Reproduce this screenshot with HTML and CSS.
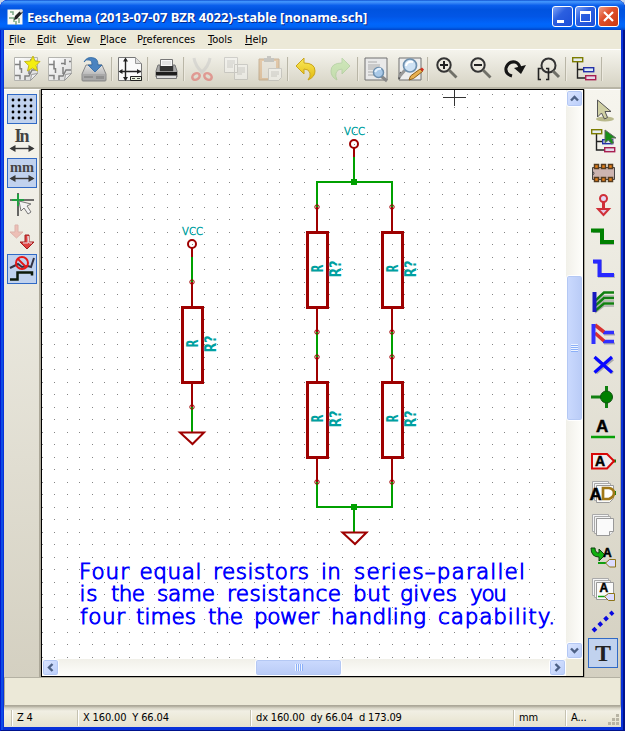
FILE: index.html
```html
<!DOCTYPE html>
<html lang="en">
<head>
<meta charset="utf-8">
<title>Eeschema</title>
<link rel="stylesheet" href="styles.css">
</head>
<body>
<svg class="defs" width="0" height="0">
  <defs>
    <linearGradient id="paper" x1="0" y1="0" x2="1" y2="1"><stop offset="0" stop-color="#fff"/><stop offset="1" stop-color="#d8d8d8"/></linearGradient>
    <linearGradient id="gold" x1="0" y1="0" x2="0" y2="1"><stop offset="0" stop-color="#f9e95c"/><stop offset="1" stop-color="#e3b90c"/></linearGradient>
    <linearGradient id="metal" x1="0" y1="0" x2="0" y2="1"><stop offset="0" stop-color="#e4e4e4"/><stop offset="1" stop-color="#9c9c9c"/></linearGradient>
    <pattern id="grid" x="42" y="94" width="25" height="25" patternUnits="userSpaceOnUse">
      <path fill="#848484" d="M0 0h1v1h-1zM12 0h1v1h-1zM0 13h1v1h-1zM12 13h1v1h-1z"/>
    </pattern>
    <symbol id="sheet" viewBox="0 0 30 30">
      <path d="M3.500 3.500h23v16l-7 7h-16z" fill="url(#paper)" stroke="#b4b4b0"/>
      <path d="M4 10.500h5m0-4v9m-5 6h5v4M14 26v-4h4l3-6h5M16 9.500h4m4-2h2M20 5v6M10.500 14v5M18 13v7" fill="none" stroke="#808080" stroke-width="1.500"/>
      <path d="M19.500 26.500l1-6 6-1z" fill="#eee" stroke="#999"/>
    </symbol>
    <symbol id="lens" viewBox="0 0 30 30">
      <circle cx="12" cy="11" r="6.700" fill="#edeae0" stroke="#343434" stroke-width="2"/>
      <path d="M17 16l7.500 7.500" stroke="#707068" stroke-width="2.800"/>
    </symbol>
    <symbol id="pages" viewBox="0 0 30 30">
      <path d="M4.500 4.500h16v17h-16z" fill="#f4f4f4" stroke="#aaa"/>
      <path d="M6.500 6.500h16v17h-16z" fill="#f4f4f4" stroke="#aaa"/>
      <path d="M8.500 8.500h17v13l-4 4h-13z" fill="#fafafa" stroke="#999"/>
    </symbol>
    <symbol id="tree" viewBox="0 0 30 30">
      <path d="M8.500 8v16h9M8.500 15.500h6" fill="none" stroke="#222" stroke-width="1.400"/>
      <rect x="3.700" y="3.700" width="10" height="4" fill="#e4ecf0" stroke="#7c7c00" stroke-width="1.400"/>
      <rect x="14.700" y="13.700" width="10" height="4" fill="#d8e8f4" stroke="#2430a8" stroke-width="1.400"/>
      <rect x="16.700" y="21.700" width="10" height="4" fill="#e4d8e8" stroke="#a82050" stroke-width="1.400"/>
    </symbol>
    <symbol id="dim" viewBox="0 0 30 30">
      <path d="M4 22.500h22" stroke="#383838" stroke-width="1.400"/>
      <path d="M2.500 22.500l6-3.500v7zM27.500 22.500l-6-3.500v7z" fill="#383838"/>
    </symbol>
    <g id="resistor" fill="none" stroke="#9e0000">
      <path d="M0 0V25M0 101V125" stroke-width="2"/>
      <circle r="2.200"/><circle cy="125" r="2.200"/>
      <rect x="-9.500" y="25.500" width="20" height="75" stroke-width="3"/>
    </g>
    <g id="resistor-text" class="ref">
      <text transform="translate(5.500 65.500) rotate(-90)" textLength="8" lengthAdjust="spacingAndGlyphs">R</text>
      <text transform="translate(23.500 70.500) rotate(-90)" textLength="17" lengthAdjust="spacingAndGlyphs">R?</text>
    </g>
    <g id="power" fill="none" stroke="#9e0000" stroke-width="2"><circle r="4"/><path d="M0 4v9"/></g>
    <path id="ground" d="M-12 .5h24L.5 12z" fill="none" stroke="#9e0000" stroke-width="2"/>
  </defs>
</svg>
<div class="window">
  <header class="titlebar">
    <svg class="app" width="16" height="16"><path d="M.5.5h15v15H.5z" fill="#f8faf4"/><path d="M3 3h3v3M2 9h5v4M9 12v4M12 9v5" fill="none" stroke="#7ba885" stroke-width="1.500"/><path d="M7 11l1-4 6-6 2 2-6 7z" fill="#222"/><path d="M12 2l2-2 2 2-2 2z" fill="#ddd"/></svg>
    <span class="caption">Eeschema (2013-07-07 BZR 4022)-stable [noname.sch]</span>
    <div class="controls">
      <button><svg width="19" height="19"><path d="M4 13h7v3H4z" fill="#fff"/></svg></button>
      <button><svg width="19" height="19"><path d="M4 4h11v11H4zM5 7v7h9V7z" fill="#fff" fill-rule="evenodd"/></svg></button>
      <button class="close"><svg width="19" height="19"><path d="M5 5l9 9M14 5l-9 9" stroke="#fff" stroke-width="2.200"/></svg></button>
    </div>
  </header>
  <nav class="menu"><span><u>F</u>ile</span><span><u>E</u>dit</span><span><u>V</u>iew</span><span><u>P</u>lace</span><span>P<u>r</u>eferences</span><span><u>T</u>ools</span><span><u>H</u>elp</span></nav>
  <div class="toolbar">
    <i><svg viewBox="0 0 30 30"><use href="#sheet"/><path d="M22 2l2 5 5 .5-4 4 1.500 5.500-5-3-5 3 1.300-5.500-4.300-4 6-.5z" fill="#f4ee10" stroke="#c4b820"/></svg></i>
    <i><svg viewBox="0 0 30 30"><use href="#sheet"/></svg></i>
    <i><svg viewBox="0 0 30 30"><path d="M7 11h16l4 9v6q0 1-1 1H4q-1 0-1-1v-6z" fill="url(#metal)" stroke="#888"/><path d="M4 20h22v6H4z" fill="#a9a9a9"/><path d="M5 23h9M18 22v3M20 22v3M22 22v3M24 22v3" stroke="#777"/><path d="M5 8Q8 2 15 4q4 1 4 7h4l-7 7-7-7h4q0-5-3-5-3-1-5 2z" fill="#4a83c0" stroke="#2f66a0" stroke-width=".8"/></svg></i>
    <b></b>
    <i><svg viewBox="0 0 30 30"><path d="M3.500 3.500h17l6 6v17h-23z" fill="#fafafa" stroke="#777"/><path d="M20.500 3.500v6h6" fill="#ddd" stroke="#999"/><path d="M10.500 5v21M5 17.500h21" stroke="#222" stroke-width="1.400"/><path d="M10.500 3.500l2.500 4H8zM10.500 27l2.500-4H8zM3.500 17.500l4-2.500v5zM26 17.500l-4-2.500v5z" fill="#222"/><path d="M15.500 22.500h11v4h-11z" fill="#e8f0dc" stroke="#222"/><path d="M17 24.500h3m2 0h3" stroke="#444"/></svg></i>
    <b></b>
    <i><svg viewBox="0 0 30 30"><path d="M9.500 5.500h12V15h-12z" fill="#f8f8f8" stroke="#777"/><path d="M11 8h9M11 10h9" stroke="#ccc"/><path d="M7 11h2v6h13v-6h2l2 6v6H5v-6z" fill="#aaa" stroke="#777"/><path d="M9 12h13v5H9z" fill="#333"/><path d="M5 18h21v4H5z" fill="#1e1e1e"/><path d="M5.500 21.500h20v3h-20z" fill="#ddd" stroke="#777"/></svg></i>
    <b></b>
    <i class="off"><svg viewBox="0 0 30 30"><path d="M7 4q1 8 9 15M23 4q-1 8-9 15" fill="none" stroke="#c4c4c4" stroke-width="3"/><ellipse cx="9" cy="22.500" rx="4" ry="3" fill="none" stroke="#e04848" stroke-width="2.500" transform="rotate(-35 9 22.500)"/><ellipse cx="21" cy="22.500" rx="4" ry="3" fill="none" stroke="#e04848" stroke-width="2.500" transform="rotate(35 21 22.500)"/></svg></i>
    <i class="off"><svg viewBox="0 0 30 30"><path d="M3.500 3.500h13v15h-13zM13.500 10.500h13v15h-13z" fill="#f8f8f8" stroke="#aaa"/><path d="M6 7h8M6 9h8M6 11h6M6 13h6M16 14h8M16 16h8M16 18h8M16 20h5" stroke="#aaa"/></svg></i>
    <i class="off"><svg viewBox="0 0 30 30"><path d="M4 5h20v21H4z" fill="#d8a068" stroke="#a07848"/><path d="M7 7h14v17H7z" fill="#e4e0d8"/><path d="M9 4h3V2h4v2h3v4H9z" fill="#999"/><path d="M13.500 14.500h13v9l-3 3h-10z" fill="#fafafa" stroke="#aaa"/><path d="M16 18h8M16 20h8M16 22h6" stroke="#aaa"/></svg></i>
    <b></b>
    <i><svg viewBox="0 0 30 30"><path d="M5 12l8-8v5q11 0 11 8 0 6-7 9 3-4 2-7-1-4-6-4v5z" fill="url(#gold)" stroke="#c9a51a"/></svg></i>
    <i class="off"><svg viewBox="0 0 30 30"><path d="M25 12l-8-8v5Q6 9 6 17q0 6 6 9-2-4-1-7 1-4 6-4v5z" fill="#a8e088" stroke="#88c070"/></svg></i>
    <b></b>
    <i><svg viewBox="0 0 30 30"><path d="M4 4h22v22H4z" fill="#e9e9e9" stroke="#707070"/><path d="M7 8h9M7 11h12M7 13h12M7 15h8M7 18h8M7 21h6" stroke="#aaa"/><path d="M20 22l6 5" stroke="#888" stroke-width="3"/><circle cx="17.500" cy="18.500" r="5" fill="#a9c9e8" stroke="#6d8fae" stroke-width="1.500"/><path d="M14 18q2-4 6-3" stroke="#e4f2ff" stroke-width="2" fill="none"/></svg></i>
    <i><svg viewBox="0 0 30 30"><path d="M4 4h22v22H4z" fill="#eee" stroke="#707070"/><path d="M6 18l-2 7" stroke="#555" stroke-width="2"/><path d="M10 16l-6 7" stroke="#999" stroke-width="3"/><circle cx="15" cy="11.500" r="6.500" fill="#cfe2f4" stroke="#6d8fae" stroke-width="1.700"/><path d="M11 12q1-5 7-4" stroke="#fff" stroke-width="2" fill="none"/><path d="M14 26l1.500-4L25 15l2.500 2.500-9 7z" fill="#e8b050" stroke="#906018"/><path d="M25 15l2.500 2.500 1.500-2-2-2z" fill="#d03020"/></svg></i>
    <b></b>
    <i><svg viewBox="0 0 30 30"><use href="#lens" x="1"/><path d="M9 11h8M13 7v8" stroke="#222" stroke-width="2"/></svg></i>
    <i><svg viewBox="0 0 30 30"><use href="#lens" x="1"/><path d="M9 11h8" stroke="#222" stroke-width="2"/></svg></i>
    <i><svg viewBox="0 0 30 30"><path d="M13 22Q6 20 7 14q2-7 9-6 4 1 5 6" fill="none" stroke="#151515" stroke-width="3"/><path d="M15 14l12-3-5 9z" fill="#151515"/></svg></i>
    <i><svg viewBox="0 0 30 30"><circle cx="15.500" cy="11.500" r="7" fill="none" stroke="#343434" stroke-width="2"/><path d="M20 17l6 6" stroke="#707068" stroke-width="3"/><path d="M8 14.500H5.500v11H8M13 14.500h2.500v11H13" fill="none" stroke="#222" stroke-width="1.600"/></svg></i>
    <b></b>
    <i><svg viewBox="0 0 30 30"><use href="#tree"/></svg></i>
    <b></b>
  </div>
  <main class="work">
    <aside class="side left">
      <i class="on"><svg viewBox="0 0 30 30"><path d="M6 6h20M6 12h20M6 18h20M6 24h20" stroke="#000" stroke-width="2.800" stroke-dasharray="0 6" stroke-linecap="round"/></svg></i>
      <i><svg viewBox="0 0 30 30"><text class="unit" x="7.500" y="16" textLength="15">In</text><use href="#dim"/></svg></i>
      <i class="on"><svg viewBox="0 0 30 30"><text class="unit mm" x="3" y="14" textLength="24" lengthAdjust="spacingAndGlyphs">mm</text><use href="#dim" y="-2"/></svg></i>
      <i><svg viewBox="0 0 30 30"><path d="M3 10h24M11 3v23" stroke="#444" stroke-width="1.600"/><path d="M5 10h12M11 4v12" stroke="#20a040" stroke-width="2"/><path d="M12 11l12 3-4 2 4 6-3 2-4-6-3 3z" fill="#f2f2f2" stroke="#777"/></svg></i>
      <i><svg viewBox="0 0 30 30"><path d="M8 3h3v7h5l-6.500 6L3 10h5z" fill="#edb0a8" stroke="#d8a098" opacity=".75"/><path d="M18 13h4v7h5l-7 7-7-7h5z" fill="#e04040" stroke="#a02020"/><path d="M16 21h5v-7l1 7h3" fill="none" stroke="#e8e0e4"/></svg></i>
      <i class="on"><svg viewBox="0 0 30 30"><path d="M3 14l8-4 4 3 6-1 3 1 3-9" fill="none" stroke="#334" stroke-width="2"/><path d="M3 25.500h7.500v-7H25v3" fill="none" stroke="#0d1a0a" stroke-width="2.500"/><circle cx="15" cy="9" r="6" fill="none" stroke="#e51818" stroke-width="2"/><path d="M11 5l8 8" stroke="#e51818" stroke-width="2"/></svg></i>
    </aside>
    <section class="viewport">
      <svg class="sheet" width="524" height="569" viewBox="42 90 524 569">
        <rect x="42" y="90" width="524" height="569" fill="url(#grid)"/>
        <path d="M443 97.500h23M454.500 90v16" stroke="#333"/>
        <g stroke="#00a000" stroke-width="2" fill="none">
          <path d="M192 257v25M192 407v25M354 157v25M317 207v-25h75v25M317 332v25M392 332v25M317 482v25h75v-25M354 507v25"/>
        </g>
        <path d="M351 179h6v6h-6zM351 504h6v6h-6z" fill="#00a000"/>
        <use href="#resistor" x="192" y="282"/><use href="#resistor" x="317" y="207"/><use href="#resistor" x="392" y="207"/><use href="#resistor" x="317" y="357"/><use href="#resistor" x="392" y="357"/>
        <use href="#resistor-text" x="192" y="282"/><use href="#resistor-text" x="317" y="207"/><use href="#resistor-text" x="392" y="207"/><use href="#resistor-text" x="317" y="357"/><use href="#resistor-text" x="392" y="357"/>
        <use href="#power" x="192" y="244"/><use href="#power" x="354" y="144"/>
        <use href="#ground" x="192" y="432"/><use href="#ground" x="354.500" y="532"/>
        <g class="vcc"><text x="182" y="235" textLength="21">VCC</text><text x="344" y="135" textLength="21">VCC</text></g>
        <g class="note">
          <text x="79" y="579" textLength="50">Four</text><text x="139.500" y="579" textLength="62">equal</text><text x="213" y="579" textLength="96">resistors</text><text x="321" y="579" textLength="20">in</text><text x="354" y="579" textLength="171">series–parallel</text>
          <text x="79.500" y="601" textLength="18">is</text><text x="111" y="601" textLength="34">the</text><text x="157" y="601" textLength="58">same</text><text x="227" y="601" textLength="114">resistance</text><text x="353" y="601" textLength="37">but</text><text x="400" y="601" textLength="57">gives</text><text x="470" y="601" textLength="37">you</text>
          <text x="80" y="624" textLength="45">four</text><text x="136" y="624" textLength="60">times</text><text x="208" y="624" textLength="35">the</text><text x="254" y="624" textLength="65">power</text><text x="331" y="624" textLength="95">handling</text><text x="438" y="624" textLength="117">capability.</text>
        </g>
      </svg>
      <div class="vscroll"><button><svg width="15" height="15"><path d="M4 9.500l3.500-3.500L11 9.500" /></svg></button><div class="thumb"><s></s></div><button><svg width="15" height="15"><path d="M4 5.500L7.500 9 11 5.500"/></svg></button></div>
      <div class="hscroll"><button><svg width="15" height="15"><path d="M9.500 4L6 7.500 9.500 11"/></svg></button><div class="thumb"><s></s></div><button><svg width="15" height="15"><path d="M5.500 4L9 7.500 5.500 11"/></svg></button></div>
    </section>
    <aside class="side right">
      <i><svg viewBox="0 0 30 30"><ellipse cx="17" cy="25" rx="9" ry="2.500" fill="#b9b98c"/><path d="M9.500 6v17l4-4 3 6 3-1.500-2.500-6h6z" fill="#d0d0a4" stroke="#555"/></svg></i>
      <i><svg viewBox="0 0 30 30"><use href="#tree"/><path d="M17 4v13l3.500-3 3 4 2-1-2-5h4.500z" fill="#189018" stroke="#666"/></svg></i>
      <i><svg viewBox="0 0 30 30"><path d="M4.500 9.500h22v12h-22z" fill="#ccb4b0" stroke="#444"/><path d="M4 13q4 2 0 5" fill="none" stroke="#444"/><path d="M6.500 6.500h4v4h-4zM13.500 6.500h4v4h-4zM20.500 6.500h4v4h-4zM6.500 19.500h4v4h-4zM13.500 19.500h4v4h-4zM20.500 19.500h4v4h-4z" fill="#e88018" stroke="#553c20" stroke-width="1.500"/></svg></i>
      <i><svg viewBox="0 0 30 30"><circle cx="15.500" cy="8.500" r="3.500" fill="#e4d8f4" stroke="#d03038" stroke-width="2"/><path d="M15.500 12v8" stroke="#d03038" stroke-width="3"/><path d="M10 19h11l-5.500 6z" fill="#e4c8e4" stroke="#d03038" stroke-width="2"/></svg></i>
      <i><svg viewBox="0 0 30 30"><path d="M5 10h9v12h12" transform="translate(0 -1)" fill="none" stroke="#aaa" stroke-width="4"/><path d="M3 8.500h11V20h12" fill="none" stroke="#008000" stroke-width="4"/></svg></i>
      <i><svg viewBox="0 0 30 30"><path d="M6 8h6v14h15" fill="none" stroke="#bbb" stroke-width="4"/><path d="M5 7.500h6.500V21H26" fill="none" stroke="#2828ff" stroke-width="4"/></svg></i>
      <i><svg viewBox="0 0 30 30"><path d="M7 18l9-8h10M7 23l9-8h10M7 27l9-7h10" fill="none" stroke="#aaa" stroke-width="1.500"/><path d="M7 15l9-8.500h10M7 20l9-8h10M7 25l9-7.500h10" fill="none" stroke="#108010" stroke-width="2.500"/><path d="M6.500 6v20" stroke="#1818c0" stroke-width="4"/></svg></i>
      <i><svg viewBox="0 0 30 30"><path d="M16 16.500h11M16 25.500h11" stroke="#aaa" stroke-width="2"/><path d="M15 14.500h11M15 23.500h11" stroke="#3030ff" stroke-width="3.500"/><path d="M7 7l9 7M7 15l9 8" stroke="#d83030" stroke-width="3.500"/><path d="M5.500 6v20" stroke="#3030ff" stroke-width="4"/></svg></i>
      <i><svg viewBox="0 0 30 30"><path d="M7 8l17 14M24 8L7 22" stroke="#aaa" stroke-width="3" transform="translate(1 1)"/><path d="M6.500 7l17.500 15.500M24 7L6.500 22.500" stroke="#0808ff" stroke-width="3.200"/></svg></i>
      <i><svg viewBox="0 0 30 30"><path d="M3 15h18M18.500 4v22" stroke="#108010" stroke-width="3"/><circle cx="18.500" cy="15" r="6" fill="#008000" stroke="#105010"/></svg></i>
      <i><svg viewBox="0 0 30 30"><text class="lab" x="8" y="18" font-size="17">A</text><path d="M3 23h24" stroke="#08a008" stroke-width="2.500"/></svg></i>
      <i><svg viewBox="0 0 30 30"><path d="M25 15h3" stroke="#108010" stroke-width="3"/><path d="M4 8h15l7 7-7 7.500H4z" fill="#f1eded" stroke="#d80808" stroke-width="2"/><text class="lab" x="7" y="20" font-size="14">A</text></svg></i>
      <i><svg viewBox="0 0 30 30"><use href="#pages" y="-1"/><path d="M25 15h3" stroke="#108010" stroke-width="4"/><text class="lab" x="1.500" y="21.500" font-size="17">A</text><path d="M15 10h6q5 1 5 5t-5 6h-6z" fill="#fff" stroke="#a07818" stroke-width="2.700"/></svg></i>
      <i><svg viewBox="0 0 30 30"><use href="#pages"/><path d="M21.500 25.500v-4h4" fill="#eee" stroke="#999"/></svg></i>
      <i><svg viewBox="0 0 30 30"><path d="M3 6h4q0 5 4 5V7l6 6-6 6v-4Q3 15 3 6z" fill="#10b010" stroke="#104010"/><text class="lab" x="15" y="15" font-size="12">A</text><path d="M10 21h10" stroke="#10a010" stroke-width="2"/><path d="M27.500 17.500h-6l-4 3.500 4 4h6z" fill="#dcdcff" stroke="#8c7418"/></svg></i>
      <i><svg viewBox="0 0 30 30"><use href="#pages"/><text class="lab" x="11.500" y="17.500" font-size="12">A</text><path d="M10 22.500h8" stroke="#10a010" stroke-width="1.500"/><path d="M26.500 19.500h-6l-4 3 4 4h6z" fill="#dcdcff" stroke="#8c7418"/></svg></i>
      <i><svg viewBox="0 0 30 30"><path d="M5 25L25 6" stroke="#0808e0" stroke-width="4" stroke-dasharray="4 4"/></svg></i>
      <i class="on"><svg viewBox="0 0 30 30"><text class="tee" x="7" y="23">T</text></svg></i>
    </aside>
  </main>
  <div class="messages"></div>
  <footer class="status"><span></span><span>Z 4</span><span>X 160.00&nbsp; Y 66.04</span><span>dx 160.00&nbsp; dy 66.04&nbsp; d 173.09</span><span>mm</span><span>A...</span>
    <svg class="grip" width="12" height="12"><path d="M8 0h3v3H8zM4 4h3v3H4zM8 4h3v3H8zM0 8h3v3H0zM4 8h3v3H4zM8 8h3v3H8z" fill="#b8b4a4"/></svg>
  </footer>
</div>
</body>
</html>
```
FILE: styles.css
```css
* { box-sizing: border-box; }
body { margin: 0; background: #c6d4ea; overflow: hidden; font: 11px "DejaVu Sans Condensed", "DejaVu Sans", sans-serif; color: #000; }
.defs { position: absolute; }
button { margin: 0; padding: 0; }
svg { display: block; }
i { font-style: normal; }

.window { width: 625px; height: 731px; padding: 0 4px 4px; display: flex; flex-direction: column; background: #0831d9; border-radius: 8px 8px 0 0; box-shadow: inset 1px 0 #0019cf, inset -2px -1px #00138c, inset 3px 0 #0c4be6; }
.titlebar { height: 30px; margin: 0 -4px; padding: 3px 6px 0 7px; display: flex; align-items: center; border-radius: 8px 8px 0 0; background: linear-gradient(#0a46c8 0, #3d95ff 4%, #3c8cf8 8%, #0a5fec 18%, #0053df 32%, #0256e6 55%, #0066fc 80%, #0064f4 90%, #0044c8 100%); }
.caption { margin-left: 4px; flex: none; width: 350px; white-space: nowrap; color: #fff; font: bold 13px "Noto Sans", sans-serif; letter-spacing: -0.01px; text-shadow: 1px 1px #0a2a88; }
.controls { margin-left: auto; display: flex; gap: 2px; }
.controls button { width: 21px; height: 21px; border: 1px solid #fff; border-radius: 3px; background: linear-gradient(135deg, #7fa5f8, #2b5fe0 40%, #1c4fd8); }
.controls .close { background: linear-gradient(135deg, #f0a088, #e0502c 40%, #c83810); }

.menu { height: 19px; padding-left: 5px; display: grid; grid-template-columns: 28px 30px 33px 37px 71px 37px 40px; align-items: center; background: #ece9d8; letter-spacing: 0; }
.toolbar { height: 40px; padding-left: 5px; display: flex; align-items: center; border-top: 1px solid #fff; border-bottom: 2px solid #b8b5a6; background: linear-gradient(#f5f4ed, #d6d3c4); }
.toolbar i { flex: none; width: 34px; display: grid; place-items: center; }
.toolbar svg { width: 30px; height: 30px; }
.toolbar b { flex: none; width: 2px; height: 24px; border-left: 1px solid #b9b6a7; border-right: 1px solid #ece9df; }
.off { opacity: .45; }

.work { height: 588px; display: flex; }
.side { flex: none; padding-top: 4px; display: flex; flex-direction: column; gap: 2px; background: linear-gradient(#f6f5ee, #d4d0c1); border-top: 1px solid #fff; }
.side i { width: 30px; height: 30px; }
.side svg { width: 30px; height: 30px; }
.side .on { background: #c1d2ee; box-shadow: inset 0 0 0 1px #316ac5; }
.left { width: 37px; padding-left: 3px; border-right: 2px solid #aca899; }
.right { width: 37px; padding-left: 3px; border-left: 1px solid #aca899; border-right: 1px solid #aca899; }
.unit { font: bold 18px "Liberation Serif", serif; fill: #444; }
.mm { font-size: 15px; }
.lab { font-family: "Liberation Sans", sans-serif; font-weight: bold; stroke: #000; stroke-width: .5; }
.tee { font: bold 24px "Liberation Serif", serif; fill: #222; }

.viewport { width: 543px; height: 588px; border: 1px solid #000; display: grid; grid-template: 569px 17px / 524px 17px; background: #ece9d8; }
.sheet { background: #fff; }
.note { font: 200 21.500px "DejaVu Sans", sans-serif; fill: #00f; stroke: #00f; stroke-width: 1; }
.vcc { font: 200 10px "DejaVu Sans", sans-serif; fill: #00a0a0; stroke: #00a0a0; stroke-width: .5; }
.ref { font: bold 15px "DejaVu Sans", sans-serif; fill: #00a0a0; }
.vscroll { display: grid; grid-template-rows: 17px 168px 146px 1fr 17px; background: linear-gradient(90deg, #f1f0e9, #fefefb); }
.vscroll .thumb { grid-row: 3; background: linear-gradient(90deg, #cbdafe, #b9cbf6); }
.vscroll button:last-child { grid-row: 5; }
.hscroll { display: grid; grid-template-columns: 17px 196px 87px 1fr 17px; background: linear-gradient(#f1f0e9, #fefefb); }
.hscroll .thumb { grid-column: 3; background: linear-gradient(#cbdafe, #b9cbf6); }
.hscroll button:last-child { grid-column: 5; }
.thumb, .vscroll button, .hscroll button { border: 1px solid #fff; border-radius: 3px; box-shadow: inset 0 0 0 1px #b4c8f4; display: grid; place-items: center; }
.vscroll button, .hscroll button { background: linear-gradient(135deg, #dce6ff, #b9cdfa); }
.vscroll path, .hscroll path { fill: none; stroke: #4d6185; stroke-width: 2.400; }
.thumb s { width: 7px; height: 8px; background: repeating-linear-gradient(#eef4fe 0 1px, #8cb0f8 1px 2px); }
.hscroll s { width: 8px; height: 7px; background: repeating-linear-gradient(90deg, #eef4fe 0 1px, #8cb0f8 1px 2px); }

.messages { height: 29px; background: #ece9d8; border: 1px solid #aca899; border-top: 1px solid #b4b1a3; }
.status { height: 21px; position: relative; display: grid; grid-template-columns: 8px 66px 173px 263px 52px 1fr; align-items: center; padding-top: 2px; background: linear-gradient(#aca899 0, #d5d2c3 2px, #f1efe4 5px, #ece9d8 60%, #e4e1d0); letter-spacing: -0.15px; }
.status span { height: 16px; padding-left: 4px; line-height: 16px; white-space: nowrap; border-left: 1px solid #fff; box-shadow: -1px 0 #c5c2b1; }
.status span:first-child { border: 0; box-shadow: none; }
.grip { position: absolute; right: 1px; bottom: 1px; }
```
